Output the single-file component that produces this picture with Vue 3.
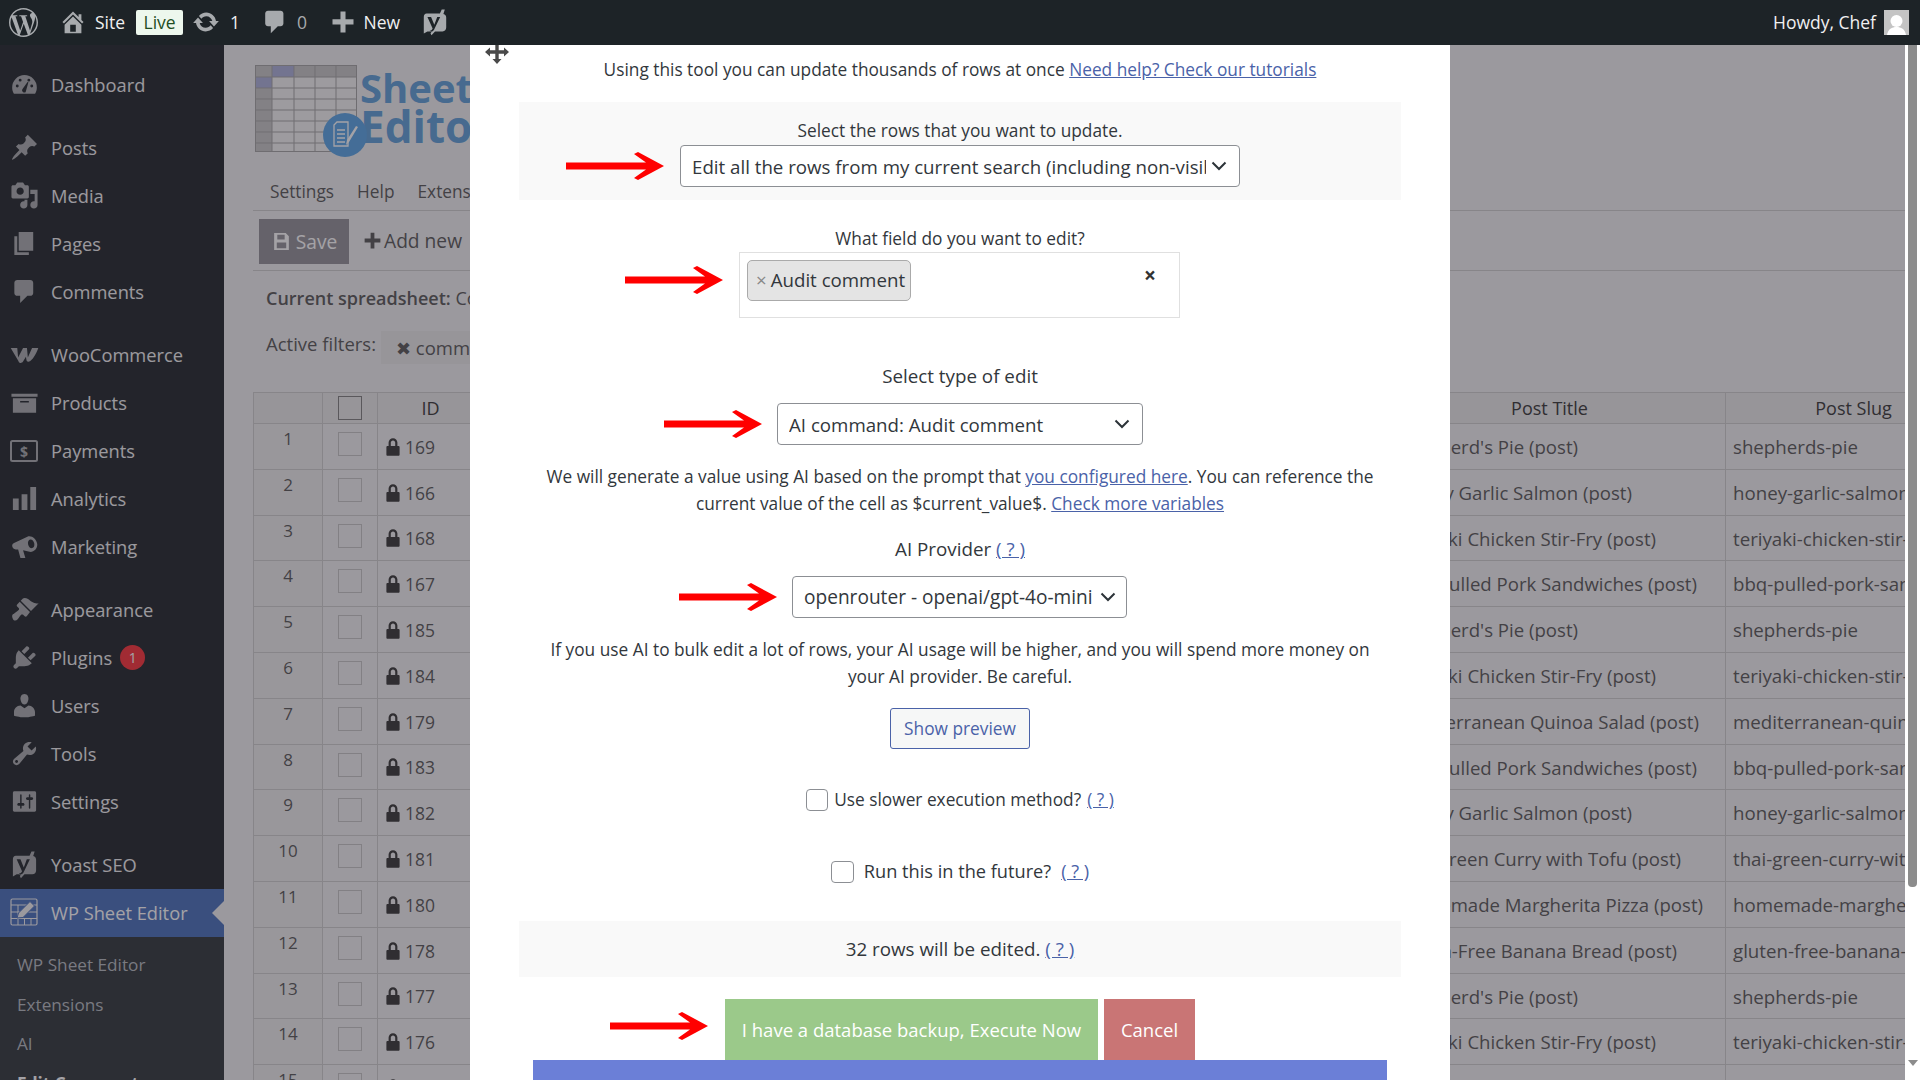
<script setup>
const icons = {
  gauge: 'M10 3.5a8.5 8.5 0 0 0-8.5 8.5c0 1.6.4 3 1.2 4.3h14.6c.8-1.3 1.2-2.7 1.2-4.3A8.5 8.5 0 0 0 10 3.5zM5 12a1 1 0 1 1 0-2 1 1 0 0 1 0 2zm2-4a1 1 0 1 1 0-2 1 1 0 0 1 0 2zm3.9 7.2a1.6 1.6 0 0 1-2.4-2l3.6-5 .6.3-1.9 6.7zM13 8a1 1 0 1 1 0-2 1 1 0 0 1 0 2zm2 4a1 1 0 1 1 0-2 1 1 0 0 1 0 2z',
  pin: 'M10.44 3.02l1.82-1.82 6.36 6.35-1.83 1.82c-1.05-.68-2.48-.57-3.41.36l-.75.75c-.92.93-1.04 2.35-.35 3.41l-1.83 1.82-2.41-2.41-2.8 2.79c-.42.42-3.38 2.71-3.8 2.29s1.86-3.39 2.28-3.81l2.79-2.79L4.1 9.36l1.83-1.82c1.05.69 2.48.57 3.4-.36l.75-.75c.93-.92 1.05-2.35.36-3.41z',
  media: 'M13 11V4c0-.55-.45-1-1-1h-1.67L9 1H5L3.67 3H2c-.55 0-1 .45-1 1v7c0 .55.45 1 1 1h10c.55 0 1-.45 1-1zM7 4.5c1.38 0 2.5 1.12 2.5 2.5S8.38 9.5 7 9.5 4.5 8.38 4.5 7 5.62 4.5 7 4.5zM14 6h5v10.5c0 1.38-1.12 2.5-2.5 2.5S14 17.88 14 16.5s1.12-2.5 2.5-2.5c.17 0 .34.02.5.05V9h-3V6zm-4 8.05V13h2v3.5c0 1.38-1.12 2.5-2.5 2.5S7 17.88 7 16.5 8.12 14 9.5 14c.17 0 .34.02.5.05z',
  page: 'M6 15V2h10v13H6zm-1 1h8v2H3V5h2v11z',
  comment: 'M5 2h9c1.1 0 2 .9 2 2v7c0 1.1-.9 2-2 2h-2l-5 5v-5H5c-1.1 0-2-.9-2-2V4c0-1.1.9-2 2-2z',
  woo: 'M.5 5.500h4.500l.6 6.500L9 5.500h2.700l.6 6.500 2.900-6.500h4.300c-1 3-3 7-5.500 9-1.500 1-2.500.5-2.700-1L11 11.500 9 14.800c-1 1.500-2.700 1.300-3.200-.4z',
  box: 'M19 4v2H1V4h18zM2 7h16v10H2V7zm11 3V9H7v1h6z',
  bars: 'M18 18V2h-4v16h4zm-6 0V7H8v11h4zm-6 0v-8H2v8h4z',
  horn: 'M1.5 9.5c0-1 .5-1.7 1.3-2L12 3.2c2.5-1.2 6.5 1.5 6.8 5.3.2 3.3-2.6 5.600-5.300 5.200L9 12.600l1.600 5.400H7.200L5.600 12H4c-1.500 0-2.500-1.300-2.500-2.500zM14 5.200c-1.300.2-1.900 1.700-1.500 3.400.4 1.600 1.600 2.800 2.800 2.500 1.200-.3 1.800-1.800 1.400-3.400-.4-1.600-1.600-2.700-2.700-2.500z',
  brush: 'M14.48 11.06L7.41 3.99l1.5-1.5c.5-.56 2.3-.47 3.51.32 1.21.8 1.43 1.28 2.91 2.1 1.18.64 2.45 1.26 4.45.85zm-.71.71L6.7 4.7 4.93 6.47c-.39.39-.39 1.02 0 1.41l1.06 1.06c.39.39.39 1.03 0 1.42-.6.6-1.43 1.11-2.21 1.69-.35.26-.7.53-1.01.84C1.43 13.23 1 14.37 2 16.5c.7 1.5 2.36 1.14 3.12.38.31-.31.58-.66.84-1.01.58-.78 1.09-1.61 1.69-2.21.39-.39 1.02-.39 1.41 0l1.06 1.06c.39.39 1.02.39 1.41 0z',
  plug: 'M13.11 4.36L9.87 7.6 8 5.73l3.24-3.24c.35-.34 1.05-.2 1.56.32.52.51.66 1.21.31 1.55zm-8 1.77l.91-1.12 9.01 9.01-1.19.84c-.71.71-2.63 1.16-3.82 1.16H6.14L4.9 17.26c-.59.59-1.54.59-2.12 0-.59-.58-.59-1.53 0-2.12l1.24-1.24v-3.88c0-1.13.4-3.19 1.09-3.89zm7.26 3.97l3.24-3.24c.34-.35 1.04-.21 1.55.31.52.51.66 1.21.31 1.55l-3.24 3.25z',
  user: 'M10 9.25c-2.27 0-2.73-3.44-2.73-3.44C7 4.02 7.82 2 9.97 2c2.16 0 2.98 2.02 2.71 3.81 0 0-.41 3.44-2.68 3.44zm0 2.57L12.72 10c2.39 0 4.52 2.33 4.52 4.53v2.49s-3.65 1.13-7.24 1.13c-3.65 0-7.24-1.13-7.24-1.13v-2.49c0-2.25 1.94-4.48 4.47-4.48z',
  tool: 'M16.68 9.77c-1.34 1.34-3.3 1.67-4.95.99l-5.41 6.52c-.99.99-2.59.99-3.58 0s-.99-2.59 0-3.57l6.52-5.42c-.68-1.65-.35-3.61.99-4.95 1.28-1.28 3.12-1.62 4.72-1.06l-2.89 2.89 2.82 2.82 2.86-2.87c.53 1.58.18 3.39-1.08 4.65zM3.81 16.21c.4.39 1.04.39 1.43 0 .4-.4.4-1.04 0-1.43-.39-.4-1.03-.4-1.43 0-.39.39-.39 1.03 0 1.43z',
  gear: 'M18 16V4c0-.55-.45-1-1-1H3c-.55 0-1 .45-1 1v12c0 .55.45 1 1 1h14c.55 0 1-.45 1-1zM8 11h1c.55 0 1 .45 1 1s-.45 1-1 1H8v1.5c0 .28-.22.5-.5.5s-.5-.22-.5-.5V13H6c-.55 0-1-.45-1-1s.45-1 1-1h1V5.5c0-.28.22-.5.5-.5s.5.22.5.5V11zm5-2h-1c-.55 0-1-.45-1-1s.45-1 1-1h1V5.5c0-.28.22-.5.5-.5s.5.22.5.5V7h1c.55 0 1 .45 1 1s-.45 1-1 1h-1v5.5c0 .28-.22.5-.5.5s-.5-.22-.5-.5V9z',
  yoast: 'M4 4h9.500L14.800 1H17l-1 3.200c1.300.3 2 1.200 2 2.600V14c0 1.700-1 2.700-2.600 2.700H10L7.500 19.500 6.800 18l1-1.300H4.600L2 18.200V6.400C2 5 2.800 4 4 4zm.6 2.400l3.700 8.200c-.3.900-.9 1.400-2 1.600l.1.900c1.800 0 2.800-.9 3.500-2.800L13.700 6.400H11.600L9.500 12 7.200 6.400z',
  home: 'M16 8.5l1.53 1.53-1.06 1.06L10 4.62l-6.47 6.47-1.06-1.06L10 2.5l4 4v-2h2v4zm-6-2.46l6 5.99V18H4v-5.97zM12 17v-5H8v5h4z',
  update: 'M10.2 3.28c3.53 0 6.43 2.61 6.92 6h2.08l-3.5 4-3.5-4h2.32c-.45-1.97-2.21-3.45-4.32-3.45-1.45 0-2.73.71-3.54 1.78L4.95 5.66C6.23 4.2 8.11 3.28 10.2 3.28zm-.4 13.44c-3.52 0-6.43-2.61-6.92-6H.8l3.5-4c1.17 1.33 2.33 2.67 3.5 4H5.48c.45 1.97 2.21 3.45 4.32 3.45 1.45 0 2.73-.71 3.54-1.78l1.71 1.95c-1.28 1.46-3.15 2.38-5.25 2.38z',
  plus: 'M17.500 8v3.800h-5.700V17.500H8.200v-5.700H2.500V8h5.700V2.500h3.600V8z',
  lock: 'M14 9h1c.55 0 1 .45 1 1v7c0 .55-.45 1-1 1H5c-.55 0-1-.45-1-1v-7c0-.55.45-1 1-1h1V6c0-2.21 1.79-4 4-4s4 1.79 4 4v3zm-2 0V6c0-1.100-.9-2-2-2s-2 .9-2 2v3h4z',
  wp: 'M21.469 6.825c.84 1.537 1.318 3.3 1.318 5.175 0 3.979-2.156 7.456-5.363 9.325l3.295-9.527c.615-1.54.82-2.771.82-3.864 0-.405-.026-.78-.07-1.11m-7.981.105c.647-.03 1.232-.105 1.232-.105.582-.075.514-.93-.067-.899 0 0-1.755.135-2.88.135-1.064 0-2.85-.15-2.85-.15-.585-.03-.661.855-.075.885 0 0 .54.061 1.125.09l1.68 4.605-2.37 7.08L5.354 6.9c.649-.03 1.234-.1 1.234-.1.585-.075.516-.93-.065-.896 0 0-1.746.138-2.874.138-.2 0-.438-.008-.69-.015C4.911 3.15 8.235 1.215 12 1.215c2.809 0 5.365 1.072 7.286 2.833-.046-.003-.091-.009-.141-.009-1.06 0-1.812.923-1.812 1.914 0 .89.513 1.643 1.06 2.531.411.72.89 1.643.89 2.977 0 .915-.354 1.994-.821 3.479l-1.075 3.585-3.9-11.61.001.014zM12 22.784c-1.059 0-2.081-.153-3.048-.437l3.237-9.406 3.315 9.087c.024.053.05.101.078.149-1.12.393-2.325.609-3.582.609M1.211 12c0-1.564.336-3.05.935-4.39L7.29 21.709C3.694 19.96 1.212 16.271 1.211 12M12 0C5.385 0 0 5.385 0 12s5.385 12 12 12 12-5.385 12-12S18.615 0 12 0'
}

const menuGroups = [
  [['Dashboard', 'gauge']],
  [['Posts', 'pin'], ['Media', 'media'], ['Pages', 'page'], ['Comments', 'comment']],
  [['WooCommerce', 'woo'], ['Products', 'box'], ['Payments', 'pay'], ['Analytics', 'bars'], ['Marketing', 'horn']],
  [['Appearance', 'brush'], ['Plugins', 'plug', 1], ['Users', 'user'], ['Tools', 'tool'], ['Settings', 'gear']]
]

const TITLE_RIGHT = 1725
const shepherd = { title: "Classic Shepherd's Pie (post)", slug: 'shepherds-pie', end: 1578 }
const honey = { title: 'Honey Garlic Salmon (post)', slug: 'honey-garlic-salmon', end: 1632 }
const teriyaki = { title: 'Teriyaki Chicken Stir-Fry (post)', slug: 'teriyaki-chicken-stir-fry', end: 1656 }
const bbq = { title: 'BBQ Pulled Pork Sandwiches (post)', slug: 'bbq-pulled-pork-sandwiches', end: 1697 }
const rows = [
  [169, shepherd], [166, honey], [168, teriyaki], [167, bbq], [185, shepherd],
  [184, teriyaki], [179, { title: 'Mediterranean Quinoa Salad (post)', slug: 'mediterranean-quinoa-salad', end: 1699 }],
  [183, bbq], [182, honey], [181, { title: 'Thai Green Curry with Tofu (post)', slug: 'thai-green-curry-with-tofu', end: 1681 }],
  [180, { title: 'Homemade Margherita Pizza (post)', slug: 'homemade-margherita-pizza', end: 1703 }],
  [178, { title: 'Gluten-Free Banana Bread (post)', slug: 'gluten-free-banana-bread', end: 1677 }],
  [177, shepherd], [176, teriyaki], [175, { title: '', slug: '', end: 1578 }]
]
const gridX = [17, 39, 60, 81]
const gridY = [12, 23, 34, 45, 56, 67, 78]
</script>

<template>
  <div class="page">
    <header class="topbar">
      <svg class="tb-wp" viewBox="0 0 24 24"><path :d="icons.wp" /></svg>
      <svg class="tb-home" viewBox="0 0 20 20"><path :d="icons.home" /></svg>
      <span class="tb-site">Site</span>
      <span class="tb-live">Live</span>
      <svg class="tb-update" viewBox="0 0 20 20"><path :d="icons.update" /></svg>
      <span class="tb-count">1</span>
      <svg class="tb-bubble" viewBox="0 0 20 20"><path :d="icons.comment" /></svg>
      <span class="tb-zero">0</span>
      <svg class="tb-plus" viewBox="0 0 20 20"><path :d="icons.plus" /></svg>
      <span class="tb-new">New</span>
      <svg class="tb-yoast" viewBox="0 0 20 20"><path fill-rule="evenodd" :d="icons.yoast" /></svg>
      <span class="tb-howdy">Howdy, Chef</span>
      <span class="tb-avatar">
        <svg viewBox="0 0 25 25"><circle cx="12.500" cy="11" r="6" fill="#fff" /><path d="M3 25c1-6 5-8 9.500-8s8.500 2 9.500 8z" fill="#fff" /></svg>
      </span>
    </header>

    <div class="workspace">
      <nav class="sidebar">
        <div v-for="(group, g) in menuGroups" :key="g" class="menu-group">
          <div v-for="item in group" :key="item[0]" class="menu-item">
            <span class="menu-icon">
              <svg v-if="item[1] === 'pay'" viewBox="0 0 28 22" class="pay-icon">
                <rect x="1" y="1" width="26" height="20" rx="1.500" fill="none" stroke="currentColor" stroke-width="2" />
                <text x="14" y="16.500" text-anchor="middle" font-size="14" font-weight="700" fill="currentColor">$</text>
              </svg>
              <svg v-else viewBox="0 0 20 20"><path :d="icons[item[1]]" /></svg>
            </span>
            <span>{{ item[0] }}</span>
            <span v-if="item[2]" class="menu-badge">{{ item[2] }}</span>
          </div>
        </div>
        <div class="menu-group last">
          <div class="menu-item">
            <span class="menu-icon"><svg viewBox="0 0 20 20"><path fill-rule="evenodd" :d="icons.yoast" /></svg></span>
            <span>Yoast SEO</span>
          </div>
          <div class="menu-item active">
            <span class="menu-icon">
              <svg viewBox="0 0 28 28" class="sheet-icon">
                <rect x="1" y="1" width="26" height="26" rx="1.500" fill="none" stroke="currentColor" stroke-width="1.200" />
                <path d="M1 7h26M1 14h26M1 20.500h26M8 7v20M14.500 20v7M21 20v7" fill="none" stroke="currentColor" stroke-width="1" />
                <path d="M7 20l1.500-5L20 3.500l4.500 4.500L13 19.500z" fill="currentColor" stroke="#456db9" stroke-width="1" />
              </svg>
            </span>
            <span>WP Sheet Editor</span>
          </div>
          <div class="submenu">
            <div>WP Sheet Editor</div>
            <div>Extensions</div>
            <div>AI</div>
            <div class="current">Edit Comments</div>
          </div>
        </div>
      </nav>

      <main class="content">
        <div class="logo">
          <svg class="logo-grid" viewBox="0 0 102 87">
            <rect width="102" height="87" fill="#f3f3f3" />
            <rect width="102" height="12" fill="#c6c6c6" />
            <rect y="12" width="17" height="75" fill="#c6c6c6" />
            <rect x="17" width="22" height="12" fill="#a9aed9" />
            <rect y="12" width="17" height="11" fill="#a9aed9" />
            <path v-for="x in gridX" :key="'x' + x" :d="`M${x} 0V87`" stroke="#a3a3a3" stroke-width="1" />
            <path v-for="y in gridY" :key="'y' + y" :d="`M0 ${y}H102`" stroke="#a3a3a3" stroke-width="1" />
            <rect x=".5" y=".5" width="101" height="86" fill="none" stroke="#a3a3a3" />
          </svg>
          <div class="logo-word">
            <div class="logo-l1">Sheet</div>
            <div class="logo-l2">Editor</div>
          </div>
          <span class="logo-badge">
            <svg viewBox="0 0 44 44">
              <path d="M11 12l3-3h11v24H11z" fill="none" stroke="#fff" stroke-width="1.300" />
              <path d="M14 17h8M14 21h8M14 25h8M14 29h8" stroke="#fff" stroke-width="1.300" />
              <path d="M23 32l1-5 9-14 2 1-9 15z" fill="#fff" />
            </svg>
          </span>
        </div>
        <div class="sheet-nav">
          <span>Settings</span><span>Help</span><span>Extensions</span>
        </div>
        <div class="toolbar">
          <button class="save" type="button">
            <svg viewBox="0 0 20 20"><path d="M3 2h11l3 3v13H3zM6 3.500V8h7V3.500zM5.500 11v5.500h9V11z" fill-rule="evenodd" /></svg>
            Save
          </button>
          <span class="add-new">
            <svg viewBox="0 0 20 20"><path :d="icons.plus" /></svg>
            Add new
          </span>
        </div>
        <div class="current-sheet"><b>Current spreadsheet:</b> Comments</div>
        <div class="filters">
          <span class="filters-label">Active filters:</span>
          <span class="chip"><span class="chip-x">✖</span> comment type</span>
        </div>
        <div class="grid">
          <div class="grid-row head">
            <div class="cell num"></div>
            <div class="cell check"><span class="box strong"></span></div>
            <div class="cell id-head">ID</div>
            <div class="cell"></div>
            <div class="cell title-head">Post Title</div>
            <div class="cell slug-head">Post Slug</div>
          </div>
          <div v-for="(row, i) in rows" :key="i" class="grid-row">
            <div class="cell num">{{ i + 1 }}</div>
            <div class="cell check"><span class="box"></span></div>
            <div class="cell id-cell">
              <svg viewBox="0 0 20 20"><path fill-rule="evenodd" :d="icons.lock" /></svg>
              {{ row[0] }}
            </div>
            <div class="cell"></div>
            <div class="cell title-cell" :style="{ paddingRight: TITLE_RIGHT - row[1].end + 'px' }">{{ row[1].title }}</div>
            <div class="cell slug-cell">{{ row[1].slug }}</div>
          </div>
        </div>
      </main>

      <div class="scrollbar">
        <div class="thumb"></div>
        <span class="scroll-down"></span>
      </div>

      <div class="overlay"></div>
    </div>

    <section class="modal">
      <svg class="move" viewBox="0 0 24 24">
        <path d="M12 0l4.500 5h-2.800v5.300H19V7.500l5 4.500-5 4.500v-2.800h-5.300V19h2.800L12 24l-4.500-5h2.800v-5.300H5v2.800L0 12l5-4.500v2.800h5.300V5H7.500z" />
      </svg>
      <div class="intro">Using this tool you can update thousands of rows at once <a>Need help? Check our tutorials</a></div>

      <div class="panel panel-rows">
        <div class="label">Select the rows that you want to update.</div>
        <div class="field">
          <svg class="arrow" viewBox="0 0 98 28"><path d="M0 10.500H80L68 2l4-2 26 14-26 14-4-2 12-8.500H0z" /></svg>
          <div class="select w-560">
            <span class="select-text">Edit all the rows from my current search (including non-visible rows)</span>
            <svg class="chev" viewBox="0 0 16 10"><path d="M1.500 1.500L8 8l6.500-6.500" /></svg>
          </div>
        </div>
      </div>

      <div class="label field-label">What field do you want to edit?</div>
      <div class="field tag-field">
        <svg class="arrow arrow-up" viewBox="0 0 98 28"><path d="M0 10.500H80L68 2l4-2 26 14-26 14-4-2 12-8.500H0z" /></svg>
        <div class="tagbox">
          <span class="tag"><span class="tag-x">×</span>Audit comment</span>
          <span class="tag-clear">×</span>
        </div>
      </div>

      <div class="label big-label type-label">Select type of edit</div>
      <div class="field mt-13">
        <svg class="arrow arrow-type" viewBox="0 0 98 28"><path d="M0 10.500H80L68 2l4-2 26 14-26 14-4-2 12-8.500H0z" /></svg>
        <div class="select w-366">
          <span class="select-text">AI command: Audit comment</span>
          <svg class="chev" viewBox="0 0 16 10"><path d="M1.500 1.500L8 8l6.500-6.500" /></svg>
        </div>
      </div>

      <p class="para">We will generate a value using AI based on the prompt that <a>you configured here</a>. You can reference the<br />current value of the cell as $current_value$. <a>Check more variables</a></p>

      <div class="label big-label provider-label">AI Provider <a>( ? )</a></div>
      <div class="field mt-13">
        <svg class="arrow" viewBox="0 0 98 28"><path d="M0 10.500H80L68 2l4-2 26 14-26 14-4-2 12-8.500H0z" /></svg>
        <div class="select w-335">
          <span class="select-text">openrouter - openai/gpt-4o-mini</span>
          <svg class="chev" viewBox="0 0 16 10"><path d="M1.500 1.500L8 8l6.500-6.500" /></svg>
        </div>
      </div>

      <p class="para">If you use AI to bulk edit a lot of rows, your AI usage will be higher, and you will spend more money on<br />your AI provider. Be careful.</p>

      <button class="preview" type="button">Show preview</button>

      <label class="check-row r1"><span class="cb"></span>Use slower execution method? <a>( ? )</a></label>
      <label class="check-row r2"><span class="cb big"></span>Run this in the future? <a>( ? )</a></label>

      <div class="panel panel-count">32 rows will be edited. <a>( ? )</a></div>

      <div class="field actions">
        <svg class="arrow arrow-actions" viewBox="0 0 98 28"><path d="M0 10.500H80L68 2l4-2 26 14-26 14-4-2 12-8.500H0z" /></svg>
        <button class="execute" type="button">I have a database backup, Execute Now</button>
        <button class="cancel" type="button">Cancel</button>
      </div>
      <div class="blue-bar"></div>
    </section>
  </div>
</template>

<style>
html, body { margin: 0; overflow: hidden; }
</style>

<style scoped>
.page {
  position: relative;
  width: 1920px;
  height: 1080px;
  overflow: hidden;
  display: flex;
  flex-direction: column;
  font-family: "Open Sans", "Noto Sans", sans-serif;
  font-size: 18px;
  color: #2c3338;
  background: #f0f0f1;
}
svg { display: block; fill: currentColor; }

/* top bar */
.topbar {
  position: relative;
  z-index: 3;
  height: 45px;
  box-sizing: border-box;
  padding-bottom: 1px;
  flex: none;
  display: flex;
  align-items: center;
  background: #1d2327;
  color: #f0f0f1;
  font-size: 17.500px;
}
.topbar svg { color: #a7aaad; flex: none; }
.tb-wp { width: 29px; height: 29px; margin-left: 9px; }
.tb-home { width: 28px; height: 28px; margin-left: 21px; }
.tb-site { margin-left: 8px; }
.tb-live {
  margin-left: 11px;
  width: 47px;
  height: 25px;
  line-height: 25px;
  text-align: center;
  border-radius: 2px;
  background: #edf7ed;
  color: #1f4d22;
}
.tb-update { width: 28px; height: 28px; margin-left: 9px; }
.tb-count { margin-left: 10px; }
.tb-bubble { width: 28px; height: 28px; margin-left: 21px; }
.tb-zero { margin-left: 8px; color: #a7aaad; }
.tb-plus { width: 28px; height: 28px; margin-left: 22px; }
.tb-new { margin-left: 6.500px; }
.tb-yoast { width: 28px; height: 28px; margin-left: 21px; }
.tb-howdy { margin-left: auto; }
.tb-avatar {
  width: 25px;
  height: 25px;
  margin: 0 11px 0 8px;
  background: #c4c4c4;
  overflow: hidden;
}

/* workspace */
.workspace {
  position: relative;
  flex: 1;
  min-height: 0;
  display: flex;
}
.sidebar {
  width: 224px;
  flex: none;
  padding-top: 16px;
  background: #1d2327;
  color: #f0f0f1;
  font-size: 18.300px;
  overflow: hidden;
}
.menu-group { margin-bottom: 15px; }
.menu-group.last { margin-bottom: 0; }
.menu-item {
  position: relative;
  height: 48px;
  box-sizing: border-box;
  padding-bottom: 1px;
  display: flex;
  align-items: center;
  padding-left: 10px;
}
.menu-icon {
  width: 30px;
  height: 30px;
  margin-right: 11px;
  flex: none;
  color: #a7aaad;
}
.menu-icon svg { width: 29px; height: 29px; }
.menu-icon .pay-icon { width: 28px; height: 22px; margin-top: 4px; }
.menu-icon .sheet-icon { width: 28px; height: 28px; color: #f0f0f1; }
.menu-badge {
  width: 25px;
  height: 25px;
  margin-left: 8px;
  border-radius: 50%;
  background: #fa2f35;
  color: #fff;
  font-size: 14px;
  line-height: 25px;
  text-align: center;
}
.menu-item.active { background: #456db9; color: #fff; }
.menu-item.active::after {
  content: "";
  position: absolute;
  right: 0;
  top: 50%;
  margin-top: -12px;
  border: 12px solid transparent;
  border-left-width: 0;
  border-right-color: #f0f0f1;
}
.submenu {
  background: #2c3338;
  padding-top: 8px;
  height: 200px;
  color: #b4b9be;
  font-size: 17.200px;
}
.submenu div {
  height: 39.500px;
  line-height: 39.500px;
  padding-left: 17px;
}
.submenu .current { color: #fff; font-weight: 700; }

/* dimmed page */
.content {
  flex: 1;
  min-width: 0;
  overflow: hidden;
  padding-left: 29px;
  color: #555;
}
.logo {
  position: relative;
  height: 125px;
  overflow: visible;
}
.logo-grid {
  position: absolute;
  left: 2px;
  top: 20px;
  width: 102px;
  height: 87px;
}
.logo-word {
  position: absolute;
  left: 107px;
  top: 24px;
  font-weight: 700;
  color: #5c9dd6;
  line-height: 38px;
}
.logo-l1 { font-size: 40px; }
.logo-l2 { font-size: 44px; }
.logo-badge {
  position: absolute;
  left: 70px;
  top: 68px;
  width: 44px;
  height: 44px;
  border-radius: 50%;
  background: #57a2e4;
}
.sheet-nav {
  height: 40px;
  display: flex;
  gap: 23px;
  padding-left: 17px;
  font-size: 17.300px;
  line-height: 44px;
  border-bottom: 1px solid #cdcdcd;
}
.toolbar {
  height: 59px;
  display: flex;
  align-items: center;
  padding-left: 6px;
  border-bottom: 1px solid #cdcdcd;
  font-size: 19.200px;
}
.save {
  width: 90px;
  height: 45px;
  margin-top: 1px;
  display: flex;
  align-items: center;
  justify-content: center;
  gap: 4px;
  border: 0;
  background: #918f96;
  color: #fff;
  font: inherit;
}
.save svg { width: 21px; height: 21px; }
.add-new {
  margin-left: 13px;
  display: flex;
  align-items: center;
  gap: 1px;
}
.add-new svg { width: 21px; height: 21px; }
.current-sheet {
  height: 54px;
  padding-left: 13px;
  line-height: 54px;
  font-size: 18px;
  white-space: nowrap;
}
.current-sheet b { font-weight: 600; }
.filters {
  height: 67px;
  display: flex;
  align-items: flex-start;
  padding-left: 13px;
  white-space: nowrap;
  font-size: 18.500px;
}
.filters-label { line-height: 38px; }
.chip {
  margin-left: 5px;
  margin-top: 6px;
  height: 33px;
  padding: 0 14px 0 15px;
  line-height: 34px;
  background: #e8e8e8;
}
.chip-x { font-size: 18px; }

.grid { font-size: 18px; width: 1800px; }
.grid-row {
  display: grid;
  grid-template-columns: 70px 55px 106px 890px 352px 256px;
  height: 45.800px;
  box-sizing: border-box;
  border-bottom: 1px solid #cdcdcd;
}
.grid-row.head {
  height: 32px;
  border-top: 1px solid #cdcdcd;
  color: #333;
}
.cell {
  position: relative;
  box-sizing: border-box;
  border-right: 1px solid #cdcdcd;
  white-space: nowrap;
  overflow: hidden;
}
.cell.num {
  border-left: 1px solid #cdcdcd;
  background: #ececec;
  text-align: center;
  font-size: 17px;
  line-height: 30px;
}
.head .cell { background: #e8e8e8; line-height: 31px; text-align: center; }
.cell.check { display: flex; justify-content: center; padding-top: 8px; }
.head .cell.check { padding-top: 3px; }
.box {
  width: 24px;
  height: 24px;
  box-sizing: border-box;
  border: 1px solid #c4c4c4;
}
.box.strong { border-color: #7d7d7d; }
.cell.id-cell {
  display: flex;
  align-items: center;
  gap: 1px;
  padding: 1px 0 0 4px;
  font-size: 17.500px;
}
.id-cell svg { width: 22px; height: 22px; color: #333; flex: none; }
.cell.title-cell {
  display: flex;
  justify-content: flex-end;
  font-size: 18.600px;
  line-height: 45px;
}
.cell.slug-cell { padding-left: 7px; font-size: 18.700px; line-height: 45px; }

.scrollbar {
  position: relative;
  z-index: 2;
  width: 15px;
  flex: none;
  background: #fff;
}
.thumb {
  width: 9px;
  height: 842px;
  margin-left: 3px;
  border-radius: 0 0 4px 4px;
  background: #8c8c8c;
}
.scroll-down {
  position: absolute;
  left: 3px;
  top: 1015px;
  border: 5px solid transparent;
  border-top: 6px solid #8c8c8c;
  border-bottom-width: 0;
}
.overlay {
  position: absolute;
  inset: 0 15px 0 0;
  background: rgba(43, 40, 48, .431);
}

/* modal */
.modal {
  position: absolute;
  z-index: 2;
  top: 45px;
  left: 470px;
  width: 980px;
  height: 1035px;
  overflow: hidden;
  background: #fff;
  color: #32373c;
  font-size: 17.300px;
  text-align: center;
  line-height: 27px;
  white-space: nowrap;
}
a { color: #4a62a8; text-decoration: underline; }
.move {
  position: absolute;
  left: 15px;
  top: -5px;
  width: 24px;
  height: 24px;
  color: #4a4a4a;
}
.intro { height: 50px; line-height: 50px; margin-bottom: 7px; }
.panel { margin: 0 49px; background: #f9f9f9; }
.panel-rows { height: 98px; box-sizing: border-box; padding-top: 16px; }
.panel-rows .label { line-height: 25px; }
.panel-count {
  height: 56px;
  line-height: 56px;
  margin-top: 36px;
  font-size: 18.800px;
}
.label { height: 27px; }
.big-label { font-size: 18.800px; }
.field-label { margin-top: 25px; }
.mt-13 { margin-top: 13px; }
.type-label { margin-top: 45px; }
.provider-label { margin-top: 19px; }
.field {
  position: relative;
  width: max-content;
  margin-left: auto;
  margin-right: auto;
  font-size: 18.700px;
}
.tag-field { margin-left: 269px; }
.arrow {
  position: absolute;
  left: -114px;
  top: 50%;
  width: 98px;
  height: 28px;
  margin-top: -14px;
  color: #f00;
}
.arrow-up { margin-top: -19px; }
.arrow-type { left: -113px; }
.arrow-actions { left: -115px; margin-top: -18px; }
.select {
  height: 42px;
  box-sizing: border-box;
  display: flex;
  align-items: center;
  padding: 0 12px 0 11px;
  border: 1px solid #8c8f94;
  border-radius: 4px;
  background: #fff;
  text-align: left;
}
.w-560 { width: 560px; }
.w-366 { width: 366px; }
.w-335 { width: 335px; margin-left: -1px; padding-right: 10px; font-size: 19.100px; }
.select-text { flex: 1; min-width: 0; overflow: hidden; margin-right: 5px; }
.chev { width: 16px; height: 10px; flex: none; fill: none; stroke: #2c3338; stroke-width: 2; }
.tagbox {
  position: relative;
  width: 441px;
  height: 66px;
  box-sizing: border-box;
  padding: 7px;
  border: 1px solid #e0e0e0;
  text-align: left;
}
.tag {
  display: inline-block;
  width: 164px;
  height: 41px;
  box-sizing: border-box;
  border: 1px solid #aaa;
  border-radius: 5px;
  background: #e4e4e4;
  line-height: 38px;
  padding-left: 8px;
}
.tag-x { color: #888; margin-right: 4px; }
.tag-clear {
  position: absolute;
  right: 23px;
  top: 9px;
  font-size: 21px;
  font-weight: 700;
  color: #333;
}
.para { margin: 18px 0 0; }
.preview {
  display: block;
  width: 140px;
  height: 41px;
  margin: 18px auto 0;
  padding: 0;
  border: 1px solid #4a62a8;
  border-radius: 3px;
  background: #f6f7f7;
  color: #4a62a8;
  font: inherit;
}
.check-row {
  display: flex;
  justify-content: center;
  align-items: center;
  gap: 6px;
  height: 27px;
}
.r1 { margin-top: 37px; }
.r2 { margin-top: 45px; gap: 10px; font-size: 18.200px; }
.cb {
  width: 22px;
  height: 22px;
  box-sizing: border-box;
  border: 1px solid #8c8f94;
  border-radius: 4px;
  background: #fff;
}
.cb.big { width: 23px; }
.actions {
  display: flex;
  gap: 6px;
  margin-top: 22px;
  margin-left: 255px;
  font-size: 18.500px;
}
.execute, .cancel {
  height: 61px;
  padding: 0;
  border: 0;
  color: #fff;
  font: inherit;
}
.execute { width: 373px; background: #9bc98a; }
.cancel { width: 91px; background: #c97575; }
.blue-bar {
  width: 854px;
  height: 60px;
  margin: 0 auto;
  background: #6b7fd7;
}
</style>
